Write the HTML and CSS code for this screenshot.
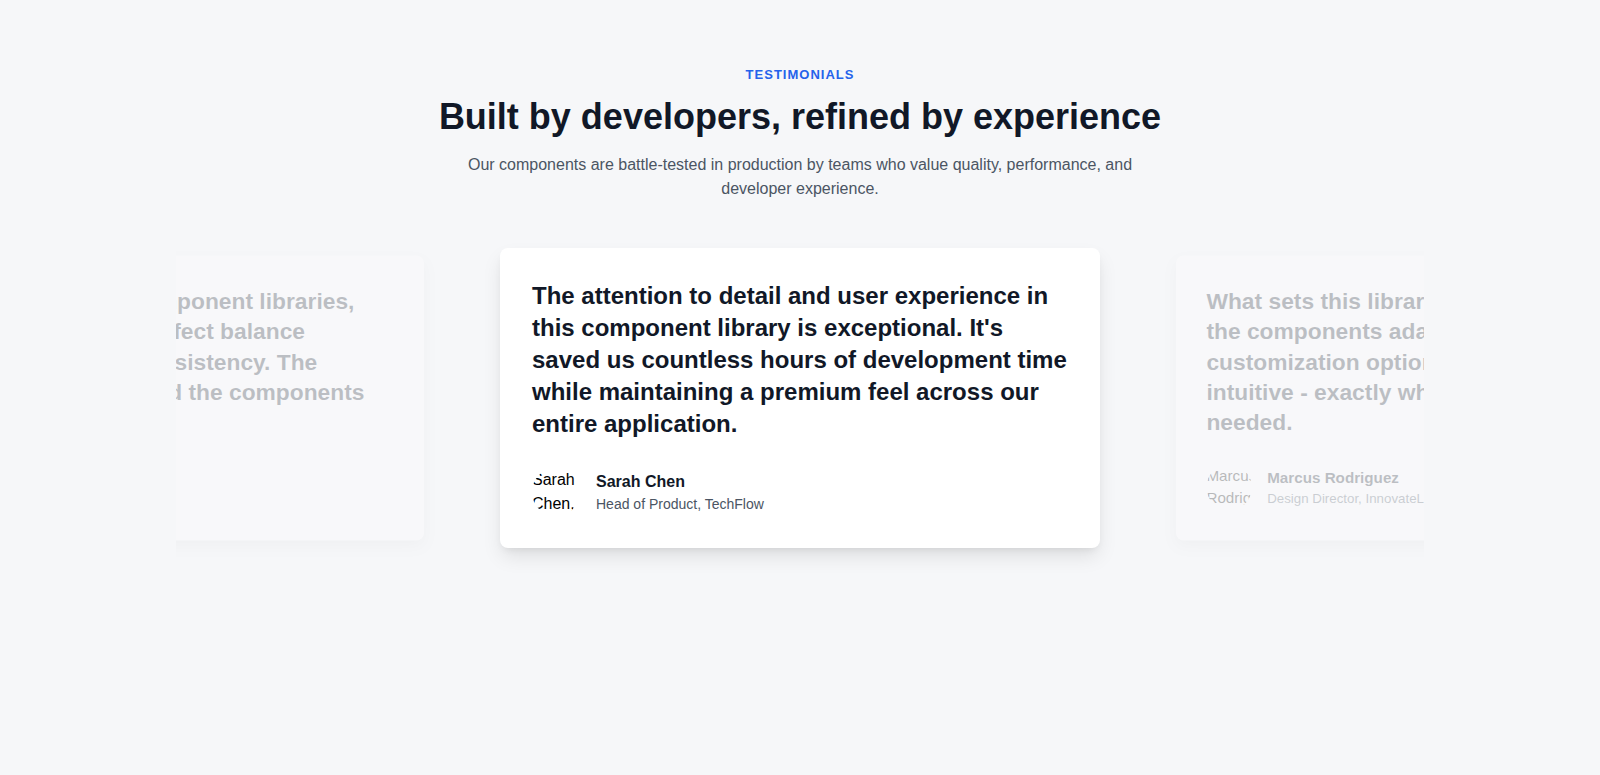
FILE: index.html
```html
<!DOCTYPE html>
<html lang="en">
<head>
<meta charset="utf-8">
<meta name="viewport" content="width=device-width, initial-scale=1">
<title>Testimonials</title>
<link rel="stylesheet" href="styles.css">
</head>
<body>
<main class="section">
  <header class="intro">
    <p class="eyebrow">Testimonials</p>
    <h2 class="title">Built by developers, refined by experience</h2>
    <p class="lead">Our components are battle-tested in production by teams who value quality, performance, and developer experience.</p>
  </header>
  <div class="carousel">
    <figure class="card card-side">
      <blockquote class="quote">After trying numerous component libraries,<br>this one finally hits the perfect balance<br>between flexibility and consistency. The<br>guides are outstanding and the components<br>are robust.</blockquote>
      <figcaption class="author">
        <div class="avatar">Emily Park, Engineer</div>
        <div class="person">
          <p class="name">Emily Park</p>
          <p class="role">Lead Engineer</p>
        </div>
      </figcaption>
    </figure>
    <figure class="card">
      <blockquote class="quote">The attention to detail and user experience in this component library is exceptional. It's saved us countless hours of development time while maintaining a premium feel across our entire application.</blockquote>
      <figcaption class="author">
        <div class="avatar">Sarah Chen, Head of Product</div>
        <div class="person">
          <p class="name">Sarah Chen</p>
          <p class="role">Head of Product, TechFlow</p>
        </div>
      </figcaption>
    </figure>
    <figure class="card card-side">
      <blockquote class="quote">What sets this library apart is how seamlessly the components adapt to any brand. The customization options are powerful yet intuitive - exactly what our design team needed.</blockquote>
      <figcaption class="author">
        <div class="avatar">Marcus Rodriguez, Design Director</div>
        <div class="person">
          <p class="name">Marcus Rodriguez</p>
          <p class="role">Design Director, InnovateLabs</p>
        </div>
      </figcaption>
    </figure>
  </div>
</main>
</body>
</html>
```
FILE: styles.css
```css
* {
  box-sizing: border-box;
  margin: 0;
}

body {
  background: #f6f7f9;
  color: #000;
  font: 16px/24px "Liberation Sans", Arial, sans-serif;
}

.section {
  max-width: 1280px;
  margin: 0 auto;
  padding: 64px 16px;
}

.intro {
  max-width: 768px;
  margin: 0 auto 8px;
  text-align: center;
}

.eyebrow {
  color: #2563eb;
  font-size: 13px;
  font-weight: 700;
  line-height: 21px;
  letter-spacing: 1px;
  text-transform: uppercase;
}

.title {
  margin-top: 12px;
  color: #111827;
  font-size: 36px;
  line-height: 40px;
}

.lead {
  max-width: 672px;
  margin: 16px auto 0;
  color: #4b5563;
}

.carousel {
  display: flex;
  justify-content: center;
  gap: 61px;
  padding: 39px 0 60px;
  overflow: hidden;
}

.card {
  display: flex;
  flex: 0 0 auto;
  flex-direction: column;
  justify-content: space-between;
  width: 600px;
  max-width: 100%;
  min-height: 300px;
  padding: 32px;
  border-radius: 8px;
  background: #fff;
  box-shadow: 0 10px 20px -2px rgba(0, 0, 0, 0.1), 0 4px 8px -4px rgba(0, 0, 0, 0.1);
}

.card-side {
  background: #fffeff;
  box-shadow: 0 6px 14px -2px rgba(0, 0, 0, 0.1);
  opacity: 0.25;
  transform: scale(0.95);
}

.quote {
  color: #111827;
  font-size: 24px;
  font-weight: 700;
  line-height: 32px;
}

.author {
  display: flex;
  align-items: center;
  gap: 16px;
}

.avatar {
  width: 48px;
  height: 48px;
  border-radius: 50%;
  overflow: hidden;
}

.name {
  color: #111827;
  font-weight: 700;
}

.role {
  color: #4b5563;
  font-size: 14px;
  line-height: 20px;
}
```
